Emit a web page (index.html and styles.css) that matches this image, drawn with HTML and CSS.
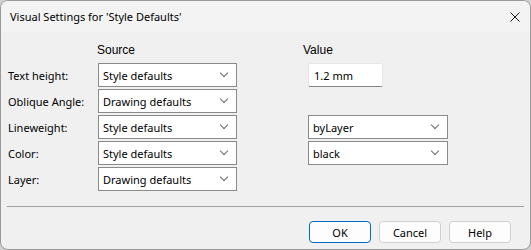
FILE: index.html
```html
<html lang="en">

<head>
	<meta charset="UTF-8">
	<meta name="viewport" content="width=device-width, initial-scale=1.0">
	<title>Visual Settings</title>
	<link rel="stylesheet" href="styles.css">
</head>

<body>
	<div class="window">
		<div class="titlebar">
			<span class="title">Visual Settings for 'Style Defaults'</span>
			<svg class="close" width="10" height="10" viewBox="0 0 10 10">
				<path d="M0.5 0.5 L9.5 9.5 M9.5 0.5 L0.5 9.5" stroke="#1a1a1a" stroke-width="1" fill="none" />
			</svg>
		</div>

		<div class="content">
			<div class="grid">
				<span></span>
				<span class="head head-source">Source</span>
				<span class="head head-value">Value</span>

				<label>Text height:</label>
				<div class="combo"><span>Style defaults</span><i class="chev"></i></div>
				<div class="textbox">1.2 mm</div>

				<label>Oblique Angle:</label>
				<div class="combo"><span>Drawing defaults</span><i class="chev"></i></div>
				<span></span>

				<label>Lineweight:</label>
				<div class="combo"><span>Style defaults</span><i class="chev"></i></div>
				<div class="combo"><span>byLayer</span><i class="chev"></i></div>

				<label>Color:</label>
				<div class="combo"><span>Style defaults</span><i class="chev"></i></div>
				<div class="combo"><span>black</span><i class="chev"></i></div>

				<label>Layer:</label>
				<div class="combo"><span>Drawing defaults</span><i class="chev"></i></div>
				<span></span>
			</div>
		</div>

		<div class="separator"></div>

		<div class="buttons">
			<button class="btn btn-default">OK</button>
			<button class="btn">Cancel</button>
			<button class="btn">Help</button>
		</div>
	</div>
</body>

</html>
```

FILE: styles.css
```css
html,
body {
	margin: 0;
	padding: 0;
	background: #cfcfcf;
}

body {
	font-family: "Noto Sans", sans-serif;
	font-size: 11px;
	color: #000;
}

.window {
	box-sizing: border-box;
	width: 531px;
	height: 250px;
	background: #f0f0f0;
	border: 1px solid #9a9a9a;
	border-radius: 8px;
	overflow: hidden;
	display: flex;
	flex-direction: column;
}

.titlebar {
	height: 31px;
	display: flex;
	align-items: center;
	justify-content: space-between;
	padding: 0 10px 0 9px;
	background: #f3f3f3;
}

.title {
	line-height: 16px;
}

.content {
	padding: 6px 0 0 6px;
}

.grid {
	display: grid;
	grid-template-columns: 91px 210px 140px;
	grid-template-rows: 23px repeat(5, 24px);
	row-gap: 2px;
	align-items: center;
}

.head {
	font-family: "Liberation Sans", sans-serif;
	font-size: 12px;
	align-self: end;
	margin-bottom: 4px;
}

.head-source {
	margin-left: -1px;
}

.head-value {
	margin-left: -5px;
}

label {
	white-space: nowrap;
	padding-left: 1px;
}

.combo {
	box-sizing: border-box;
	width: 139px;
	height: 24px;
	background: #fff;
	border: 1px solid #8a8a8a;
	display: flex;
	align-items: center;
	justify-content: space-between;
	padding: 0 9px 0 4px;
}

.grid> :nth-child(3n) {
	justify-self: start;
}

.grid> .combo:nth-child(3n) {
	width: 140px;
}

.chev {
	width: 5px;
	height: 5px;
	border-right: 1px solid #6a6a6a;
	border-bottom: 1px solid #6a6a6a;
	transform: rotate(45deg);
	margin-top: -4px;
}

.textbox {
	box-sizing: border-box;
	width: 75px;
	height: 24px;
	background: #fff;
	border: 1px solid #e6e6e6;
	border-bottom-color: #868686;
	border-radius: 2px;
	padding: 0 5px;
	display: flex;
	align-items: center;
}

.separator {
	margin: 15px 6px 0 6px;
	border-top: 1px solid #a0a0a0;
}

.buttons {
	display: flex;
	justify-content: flex-end;
	gap: 8px;
	padding: 14px 19px 0 0;
}

.btn {
	box-sizing: border-box;
	width: 62px;
	height: 22px;
	background: #fdfdfd;
	border: 1px solid #d0d0d0;
	border-radius: 4px;
	font-family: "Noto Sans", sans-serif;
	font-size: 11px;
	color: #000;
	padding: 0;
}

.btn-default {
	border-color: #0067c0;
}
```
